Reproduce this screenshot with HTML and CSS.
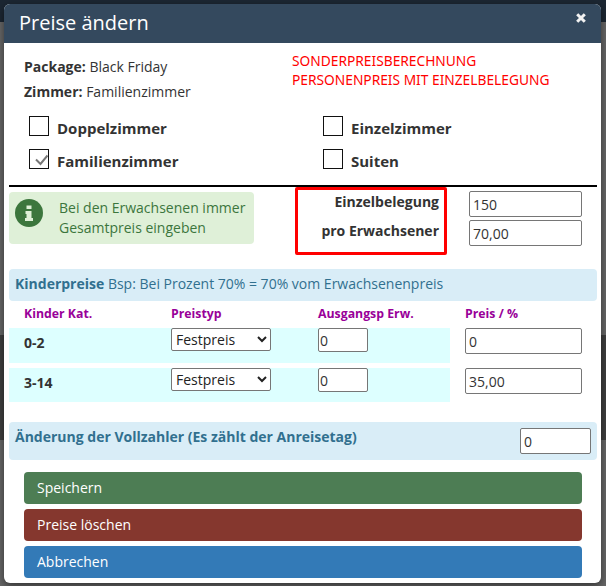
FILE: index.html
```html
<!DOCTYPE html>
<html lang="de">
<head>
<meta charset="UTF-8" />
<title>Preise ändern</title>
<link rel="stylesheet" href="styles.css">
</head>
<body>
<div class="modal" role="dialog" aria-label="Preise ändern">
  <div class="modal-header">
    <h4>Preise ändern</h4>
    <svg class="close" width="10" height="10" viewBox="0 0 10 10"><path d="M1.2 1.2l7.6 7.6M8.8 1.2l-7.6 7.6" fill="none" stroke="#f2f2f2" stroke-width="3"/></svg>
  </div>
  <div class="modal-body">
    <div class="top-row">
      <div class="info">
        <p><b>Package:</b> Black Friday</p>
        <p><b>Zimmer:</b> Familienzimmer</p>
      </div>
      <div class="note">SONDERPREISBERECHNUNG<br>PERSONENPREIS MIT EINZELBELEGUNG</div>
    </div>

    <div class="rooms">
      <label class="room"><span class="box"></span>Doppelzimmer</label>
      <label class="room"><span class="box"></span>Einzelzimmer</label>
      <label class="room"><span class="box checked"><svg width="18" height="18" viewBox="0 0 18 18"><path d="M6 9.5l4.5 4.5 7-8.5" fill="none" stroke="#777" stroke-width="2"/></svg></span>Familienzimmer</label>
      <label class="room"><span class="box"></span>Suiten</label>
    </div>

    <hr class="divider">

    <div class="adult-row">
      <div class="hint">
        <svg class="hint-icon" width="28" height="28" viewBox="0 0 28 28">
          <circle cx="14" cy="14" r="14" fill="#3c763d"/>
          <path d="M11.5 6.5h5v3.5h-5zM10.5 12h6v7h1.5v3h-8v-3h1.5v-4h-1z" fill="#dff0d8"/>
        </svg>
        <div>Bei den Erwachsenen immer Gesamtpreis eingeben</div>
      </div>
      <div class="adult-labels">
        <div>Einzelbelegung</div>
        <div>pro Erwachsener</div>
      </div>
      <div class="adult-inputs">
        <input class="field" type="text" value="150">
        <input class="field" type="text" value="70,00">
      </div>
    </div>

    <div class="bar kids-bar"><b>Kinderpreise</b> Bsp: Bei Prozent 70% = 70% vom Erwachsenenpreis</div>

    <div class="kids-head">
      <div class="col-cat">Kinder Kat.</div>
      <div class="col-type">Preistyp</div>
      <div class="col-base">Ausgangsp Erw.</div>
      <div class="col-price">Preis / %</div>
    </div>
    <div class="kids-row">
      <div class="kids-cells">
        <div class="col-cat">0-2</div>
        <div class="col-type"><select class="type"><option>Festpreis</option></select></div>
        <div class="col-base"><input class="base" type="text" value="0"></div>
      </div>
      <div class="col-price"><input class="field price" type="text" value="0"></div>
    </div>
    <div class="kids-row">
      <div class="kids-cells">
        <div class="col-cat">3-14</div>
        <div class="col-type"><select class="type"><option>Festpreis</option></select></div>
        <div class="col-base"><input class="base" type="text" value="0"></div>
      </div>
      <div class="col-price"><input class="field price" type="text" value="35,00"></div>
    </div>

    <div class="bar payer-bar">
      <b>Änderung der Vollzahler (Es zählt der Anreisetag)</b>
      <input class="field payer" type="text" value="0">
    </div>

    <div class="buttons">
      <button class="btn btn-save">Speichern</button>
      <button class="btn btn-delete">Preise löschen</button>
      <button class="btn btn-cancel">Abbrechen</button>
    </div>
  </div>
</div>
</body>
</html>
```

FILE: styles.css
```css
* {
  box-sizing: border-box;
}
html, body {
  height: 100%;
}
body {
  margin: 0;
  overflow: hidden;
  background: linear-gradient(#1c2733 0, #1c2733 22px, #676767 22px, #676767 335px, #3f3f3f 335px, #3f3f3f 440px, #676767 440px);
  font-family: "Open Sans", sans-serif;
  font-size: 14px;
  color: #333;
  padding: 4px 5px 0 4px;
}
.modal {
  width: 597px;
  height: 579px;
  background: white;
  border-radius: 6px;
  box-shadow: 0 3px 9px rgba(0,0,0,0.5);
  overflow: hidden;
}
.modal-header {
  height: 39px;
  background: #34495e;
  color: white;
  display: flex;
  justify-content: space-between;
  padding: 0 15px;
}
.modal-header h4 {
  margin: 0;
  font-size: 20px;
  font-weight: 400;
  line-height: 38px;
}
.close {
  margin-top: 9px;
}
.modal-body {
  padding-top: 5px;
}
.top-row {
  display: flex;
  height: 69px;
}
.info {
  width: 288px;
  padding: 9px 0 0 20px;
}
.info p {
  margin: 0 0 6px;
  line-height: 19px;
}
.note {
  color: #f00;
  font-family: "Noto Sans", sans-serif;
  font-size: 13.75px;
  line-height: 19px;
  padding-top: 3px;
}
.rooms {
  display: grid;
  grid-template-columns: 294px 1fr;
  row-gap: 11px;
  padding-left: 25px;
}
.room {
  display: flex;
  align-items: center;
  gap: 8px;
  font-weight: 700;
  font-size: 15px;
  height: 22px;
}
.box {
  width: 20px;
  height: 20px;
  border: 1px solid #111;
  display: block;
  margin-top: -5px;
  flex: none;
}
.checked svg {
  display: block;
}
.divider {
  border: 0;
  border-top: 2px solid #000;
  margin: 13px 4px 0 5px;
}
.adult-row {
  display: flex;
  height: 82px;
  padding: 5px 0 0 5px;
}
.hint {
  width: 245px;
  height: 52px;
  background: #dff0d8;
  color: #3c763d;
  border-radius: 4px;
  display: flex;
  gap: 16px;
  padding: 6px;
  line-height: 20px;
  font-size: 14px;
}
.hint-icon {
  flex: none;
  margin-top: 1px;
}
.adult-labels {
  width: 152px;
  height: 68px;
  margin: -5px 0 0 41px;
  border: 3px solid #f00;
  border-radius: 2px;
  padding: 1px 5px 0 0;
  text-align: right;
  font-weight: 700;
}
.adult-labels div {
  line-height: 22px;
  margin-bottom: 7px;
}
.adult-inputs {
  margin: -1px 0 0 22px;
  display: flex;
  flex-direction: column;
  gap: 3px;
}
.field {
  width: 113px;
  height: 26px;
  border: 1px solid #767676;
  border-radius: 2px;
  padding: 1px 3px;
  font: 14px "Open Sans", sans-serif;
  color: #333;
  background: white;
}
.bar {
  margin: 0 4px 0 5px;
  background: #d9edf7;
  color: #31708f;
  border-radius: 4px;
  padding: 0 6px;
}
.kids-bar {
  height: 32px;
  line-height: 30px;
}
.kids-head {
  display: flex;
  height: 27px;
  padding-left: 20px;
  color: #990099;
  font-weight: 700;
  font-size: 12.3px;
  line-height: 26px;
}
.col-cat, .col-type, .col-base {
  width: 147px;
}
.kids-row {
  display: flex;
  align-items: flex-start;
  padding-left: 5px;
  margin-bottom: 5px;
}
.kids-cells {
  display: flex;
  width: 441px;
  height: 35px;
  background: #dff;
  padding-left: 15px;
}
.kids-row + .kids-row {
  margin-bottom: 0;
}
.kids-row + .kids-row .kids-cells {
  height: 34px;
}
.kids-cells .col-cat {
  font-weight: 700;
  line-height: 30px;
}
.kids-cells .col-base {
  width: 132px;
}
.kids-row .col-price {
  margin-left: 15px;
}
.price {
  width: 117px;
  display: block;
}
.type {
  display: block;
  width: 100px;
  height: 23px;
  border: 1px solid #767676;
  border-radius: 2px;
  background: white;
  font: 14px "Open Sans", sans-serif;
  color: #222;
  padding: 0;
}
.base {
  display: block;
  width: 50px;
  height: 24px;
  border: 1px solid #767676;
  border-radius: 2px;
  padding: 0 1px;
  font: 14px "Open Sans", sans-serif;
  color: #333;
}
.payer-bar {
  margin-top: 20px;
  height: 38px;
  display: flex;
  justify-content: space-between;
  line-height: 30px;
}
.payer {
  width: 71px;
  margin-top: 6px;
}
.buttons {
  margin: 12px 0 0 20px;
  width: 558px;
  display: flex;
  flex-direction: column;
  gap: 5px;
}
.btn {
  height: 32px;
  border: 0;
  border-radius: 4px;
  color: white;
  text-align: left;
  padding: 0 13px 2px;
  font: 14px "Open Sans", sans-serif;
}
.btn-save {
  background: #4d7d54;
}
.btn-delete {
  background: #85372e;
}
.btn-cancel {
  background: #337ab7;
}
```
